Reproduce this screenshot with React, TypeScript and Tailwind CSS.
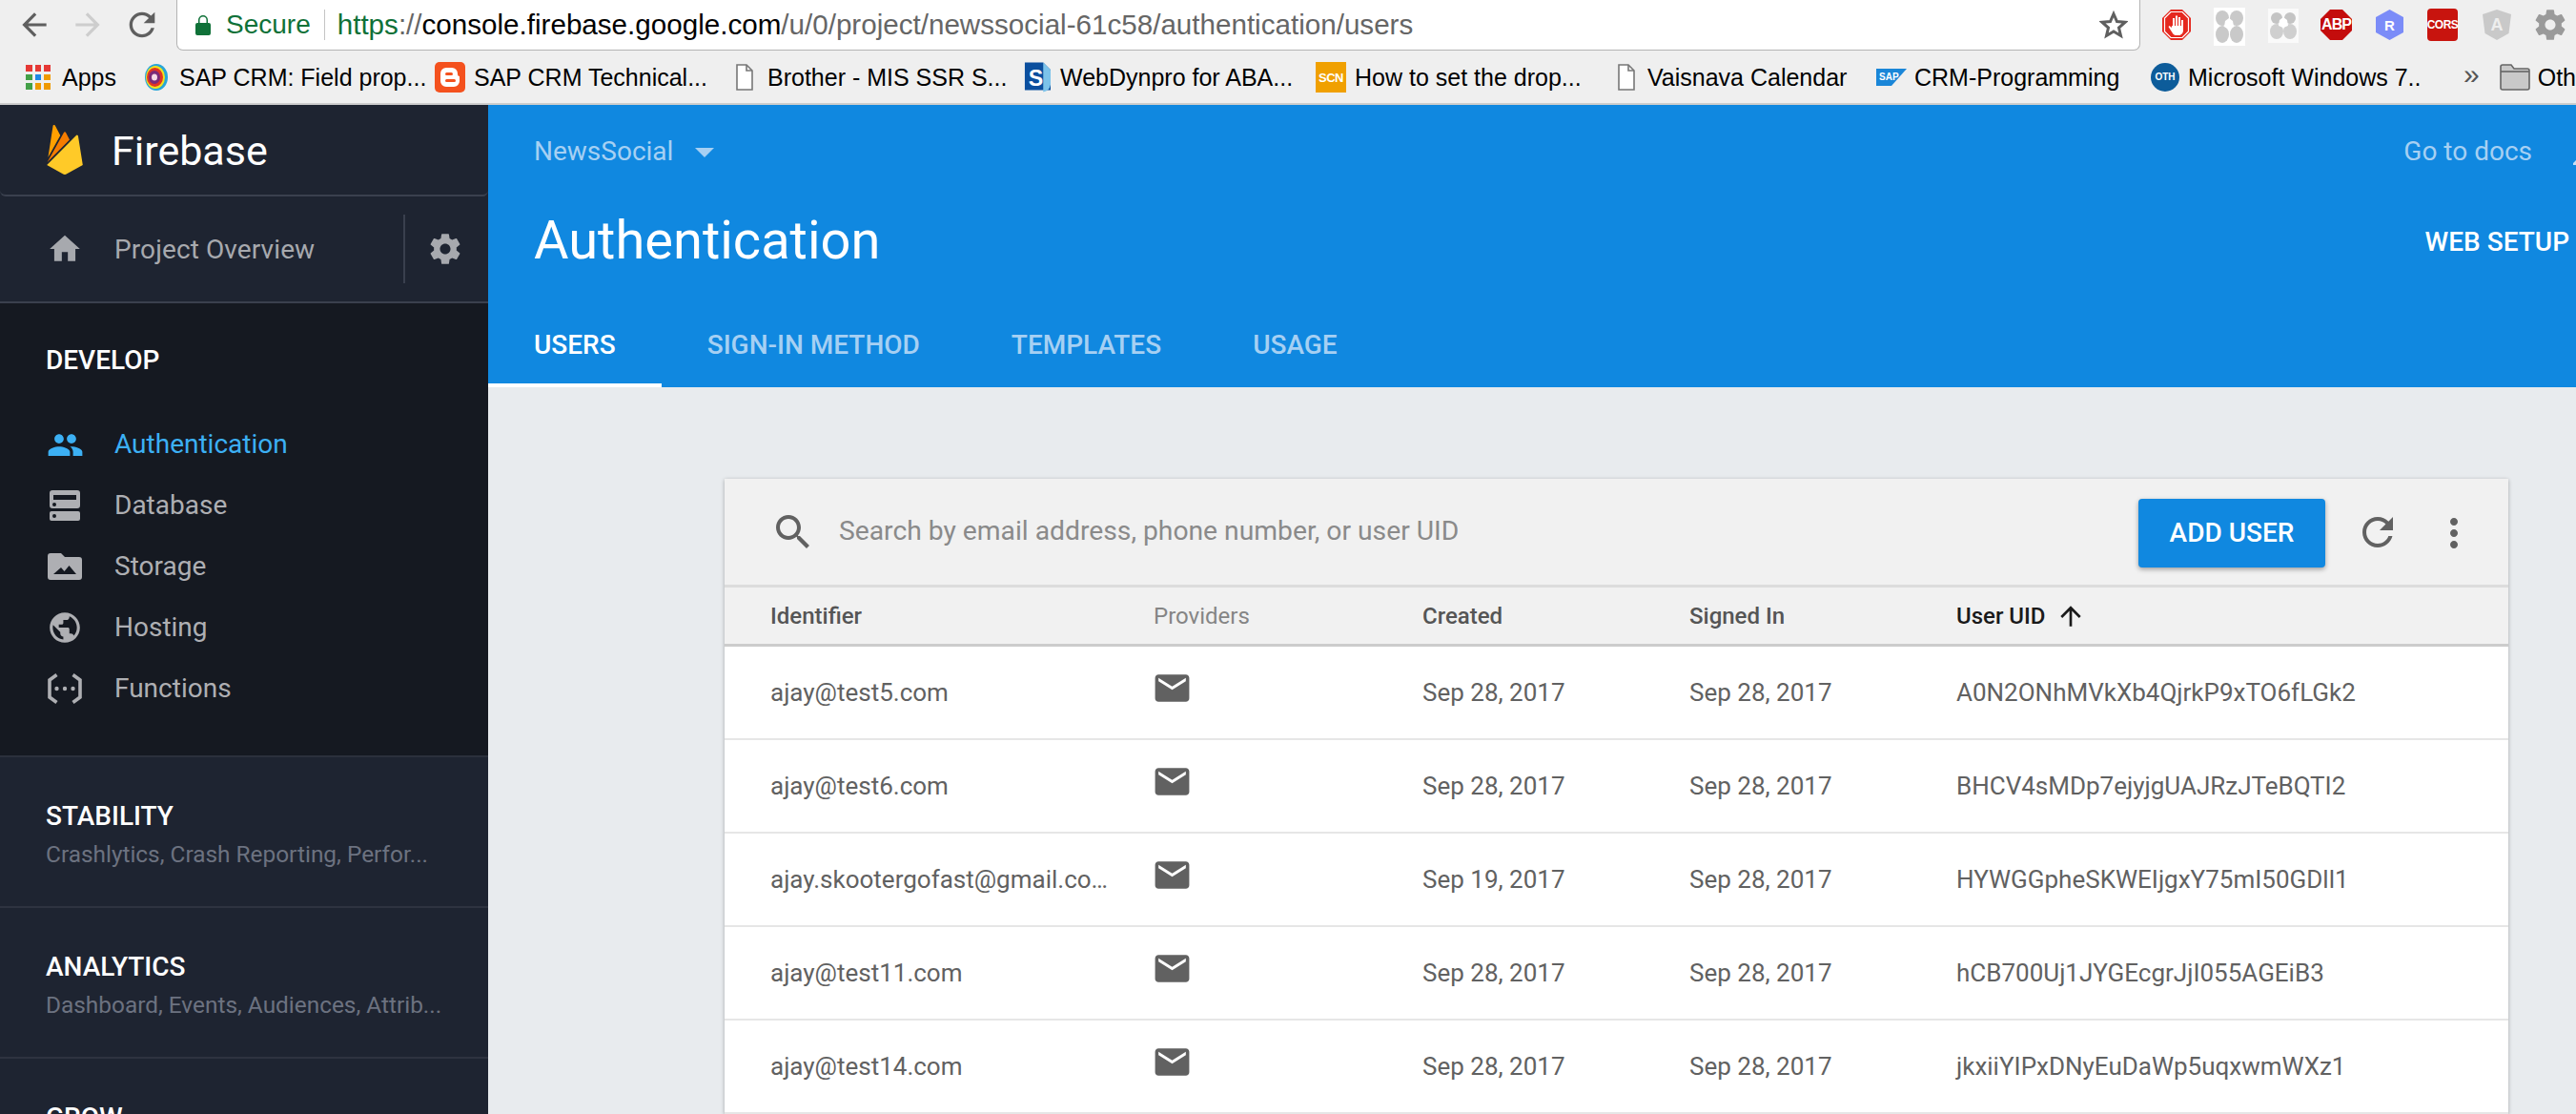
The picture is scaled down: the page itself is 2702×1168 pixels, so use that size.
import React from "react";

const P = {
  home: "M10 20v-6h4v6h5v-8h3L12 3 2 12h3v8z",
  settings:
    "M19.43 12.98c.04-.32.07-.64.07-.98s-.03-.66-.07-.98l2.11-1.65c.19-.15.24-.42.12-.64l-2-3.46c-.12-.22-.39-.3-.61-.22l-2.49 1c-.52-.4-1.08-.73-1.69-.98l-.38-2.65C14.46 2.18 14.25 2 14 2h-4c-.25 0-.46.18-.49.42l-.38 2.65c-.61.25-1.17.59-1.69.98l-2.49-1c-.23-.09-.49 0-.61.22l-2 3.46c-.13.22-.07.49.12.64l2.11 1.65c-.04.32-.07.65-.07.98s.03.66.07.98l-2.11 1.65c-.19.15-.24.42-.12.64l2 3.46c.12.22.39.3.61.22l2.49-1c.52.4 1.08.73 1.69.98l.38 2.65c.03.24.24.42.49.42h4c.25 0 .46-.18.49-.42l.38-2.65c.61-.25 1.17-.59 1.69-.98l2.49 1c.23.09.49 0 .61-.22l2-3.46c.12-.22.07-.49-.12-.64l-2.11-1.65zM12 15.5c-1.93 0-3.5-1.57-3.5-3.5s1.57-3.5 3.5-3.5 3.5 1.57 3.5 3.5-1.57 3.5-3.5 3.5z",
  people:
    "M16 11c1.66 0 2.99-1.34 2.99-3S17.66 5 16 5c-1.66 0-3 1.34-3 3s1.34 3 3 3zm-8 0c1.66 0 2.99-1.34 2.99-3S9.66 5 8 5C6.34 5 5 6.34 5 8s1.34 3 3 3zm0 2c-2.33 0-7 1.17-7 3.5V19h14v-2.5c0-2.33-4.67-3.5-7-3.5zm8 0c-.29 0-.62.02-.97.05 1.16.84 1.97 1.97 1.97 3.45V19h6v-2.5c0-2.33-4.67-3.5-7-3.5z",
  publicIcon:
    "M12 2C6.48 2 2 6.48 2 12s4.48 10 10 10 10-4.48 10-10S17.52 2 12 2zm-1 17.93c-3.95-.49-7-3.85-7-7.93 0-.62.08-1.21.21-1.79L9 15v1c0 1.1.9 2 2 2v1.93zm6.9-2.54c-.26-.81-1-1.39-1.9-1.39h-1v-3c0-.55-.45-1-1-1H8v-2h2c.55 0 1-.45 1-1V7h2c1.1 0 2-.9 2-2v-.41c2.93 1.19 5 4.06 5 7.41 0 2.08-.8 3.97-2.1 5.39z",
  search:
    "M15.5 14h-.79l-.28-.27C15.41 12.59 16 11.11 16 9.5 16 5.91 13.09 3 9.5 3S3 5.91 3 9.5 5.91 16 9.5 16c1.61 0 3.09-.59 4.23-1.57l.27.28v.79l5 4.99L20.49 19l-4.99-5zm-6 0C7.01 14 5 11.99 5 9.5S7.01 5 9.5 5 14 7.01 14 9.5 11.99 14 9.5 14z",
  refresh:
    "M17.65 6.35C16.2 4.9 14.21 4 12 4c-4.42 0-7.99 3.58-7.99 8s3.57 8 7.99 8c3.73 0 6.84-2.55 7.73-6h-2.08c-.82 2.33-3.04 4-5.65 4-3.31 0-6-2.69-6-6s2.69-6 6-6c1.66 0 3.14.69 4.22 1.78L13 11h7V4l-2.35 2.35z",
  more: "M12 8c1.1 0 2-.9 2-2s-.9-2-2-2-2 .9-2 2 .9 2 2 2zm0 2c-1.1 0-2 .9-2 2s.9 2 2 2 2-.9 2-2-.9-2-2-2zm0 6c-1.1 0-2 .9-2 2s.9 2 2 2 2-.9 2-2-.9-2-2-2z",
  mail: "M20 4H4c-1.1 0-1.99.9-1.99 2L2 18c0 1.1.9 2 2 2h16c1.1 0 2-.9 2-2V6c0-1.1-.9-2-2-2zm0 4l-8 5-8-5V6l8 5 8-5v2z",
  up: "M4 12l1.41 1.41L11 7.83V20h2V7.83l5.58 5.59L20 12l-8-8-8 8z",
  bell: "M12 22c1.1 0 2-.9 2-2h-4c0 1.1.9 2 2 2zm6-6v-5c0-3.07-1.63-5.64-4.5-6.32V4c0-.83-.67-1.5-1.5-1.5s-1.5.67-1.5 1.5v.68C7.64 5.36 6 7.92 6 11v5l-2 2v1h16v-1l-2-2z",
};

function Icon({ d, className }: { d: string; className: string }) {
  return (
    <svg viewBox="0 0 24 24" className={className} fill="currentColor">
      <path d={d} />
    </svg>
  );
}

function DocIcon() {
  return (
    <svg viewBox="0 0 18 28" className="w-[18px] h-[28px]" fill="#fff" stroke="#777" strokeWidth="1.6">
      <path d="M1 1h10l6 6v20H1z" />
      <path d="M11 1v6h6" fill="none" />
    </svg>
  );
}

function AppsIcon() {
  const c = ["#e53935", "#e53935", "#e53935", "#43a047", "#1e88e5", "#ef9a00", "#43a047", "#ef9a00", "#ef9a00"];
  return (
    <div className="grid grid-cols-3 gap-[3px] w-[26px] h-[26px]">
      {c.map((x, i) => (
        <div key={i} style={{ background: x }} />
      ))}
    </div>
  );
}

function TargetIcon() {
  return (
    <svg viewBox="0 0 24 28" className="w-[24px] h-[28px]">
      <ellipse cx="12" cy="14" rx="12" ry="14" fill="#27a6d8" />
      <ellipse cx="11" cy="14" rx="10" ry="12" fill="#f3e21c" />
      <ellipse cx="10.5" cy="14" rx="8.5" ry="10" fill="#e23424" />
      <ellipse cx="10" cy="14" rx="6" ry="7" fill="#7c2a78" />
      <ellipse cx="10" cy="14" rx="3" ry="3.5" fill="#f6dbe6" />
    </svg>
  );
}

function BloggerIcon() {
  return (
    <svg viewBox="0 0 32 32" className="w-[32px] h-[32px]">
      <rect width="32" height="32" rx="5" fill="#f4511e" />
      <path d="M12 6h6a6 6 0 016 6v1a2 2 0 002 2v5a6 6 0 01-6 6h-8a6 6 0 01-6-6v-8a6 6 0 016-6z" fill="#fff" />
      <rect x="11" y="11" width="8" height="3" rx="1.5" fill="#f4511e" />
      <rect x="11" y="18" width="11" height="3" rx="1.5" fill="#f4511e" />
    </svg>
  );
}

function SIcon() {
  return (
    <svg viewBox="0 0 30 32" className="w-[29px] h-[32px]">
      <path d="M2 0h20l8 8v22H2z" fill="#0b4f9e" />
      <path d="M22 0l8 8v16a10 10 0 01-8 8z" fill="#7cc3ea" />
      <text x="14" y="25" fontSize="24" fontWeight="700" fill="#fff" textAnchor="middle" fontFamily="Liberation Sans">S</text>
    </svg>
  );
}

function ScnIcon() {
  return (
    <div className="w-[32px] h-[32px] bg-[#f0a000] flex items-center justify-center text-white text-[13px] font-bold leading-none tracking-[-0.5px]">
      SCN
    </div>
  );
}

function SapIcon() {
  return (
    <svg viewBox="0 0 32 18" className="w-[32px] h-[18px]">
      <path d="M0 0h32L16 18H0z" fill="#1a86d8" />
      <text x="3" y="12" fontSize="10" fontWeight="700" fill="#fff" fontFamily="Liberation Sans">SAP</text>
    </svg>
  );
}

function OthIcon() {
  return (
    <div className="w-[30px] h-[30px] rounded-full bg-[#0d5c9a] flex items-center justify-center text-white text-[10px] font-bold leading-none">
      OTH
    </div>
  );
}

function FolderIcon() {
  return (
    <svg viewBox="0 0 32 28" className="w-[32px] h-[28px]" fill="#c9c9c9" stroke="#666" strokeWidth="1.6">
      <path d="M1 3a2 2 0 012-2h9l3 4h14a2 2 0 012 2v18a2 2 0 01-2 2H3a2 2 0 01-2-2z" />
      <path d="M1 8h30" fill="none" />
    </svg>
  );
}

const bookmarks = [
  { w: "w-[152px]", pl: "pl-[27px]", gap: "gap-[12px]", icon: <AppsIcon />, label: "Apps" },
  { w: "w-[304px]", pl: "", gap: "gap-[12px]", icon: <TargetIcon />, label: "SAP CRM: Field prop..." },
  { w: "w-[316px]", pl: "", gap: "gap-[9px]", icon: <BloggerIcon />, label: "SAP CRM Technical..." },
  { w: "w-[301px]", pl: "", gap: "gap-[15px]", icon: <DocIcon />, label: "Brother - MIS SSR S..." },
  { w: "w-[307px]", pl: "", gap: "gap-[10px]", icon: <SIcon />, label: "WebDynpro for ABA..." },
  { w: "w-[317px]", pl: "", gap: "gap-[9px]", icon: <ScnIcon />, label: "How to set the drop..." },
  { w: "w-[271px]", pl: "", gap: "gap-[13px]", icon: <DocIcon />, label: "Vaisnava Calendar" },
  { w: "w-[288px]", pl: "", gap: "gap-[8px]", icon: <SapIcon />, label: "CRM-Programming" },
  { w: "w-[328px]", pl: "", gap: "gap-[9px]", icon: <OthIcon />, label: "Microsoft Windows 7.." },
];

function Extensions() {
  return (
    <div className="flex items-center ml-[23px] h-[52px]">
      <svg viewBox="0 0 30 32" className="w-[30px] h-[32px]">
        <path d="M9 0h12l9 9v14l-9 9H9l-9-9V9z" fill="#e5281f" />
        <path d="M9 2.5h12L27.5 9v14L21 29.5H9L2.5 23V9z" fill="none" stroke="#fff" strokeWidth="1.2" />
        <path d="M10 10v9l-2.5-2-1 1 4.5 7c1 1.4 2 2 4 2h2c3 0 5-2 5-5V11h-2v6h-1V8h-2v9h-1V6.5h-2V17h-1V9h-2v8h-1v-7z" fill="#fff" />
      </svg>
      <svg viewBox="0 0 33 40" className="ml-[24px] w-[33px] h-[40px] mt-[4px]">
        <rect width="33" height="40" fill="#fff" />
        <ellipse cx="9" cy="11" rx="7" ry="8" fill="#c9c9c9" />
        <ellipse cx="24" cy="11" rx="7" ry="8" fill="#c9c9c9" />
        <ellipse cx="9" cy="28" rx="7" ry="9" fill="#c9c9c9" />
        <ellipse cx="24" cy="28" rx="7" ry="9" fill="#c9c9c9" />
        <path d="M12 14l4-3 4 3 1 6-5 3-5-3z" fill="#fff" />
      </svg>
      <svg viewBox="0 0 32 36" className="ml-[24px] w-[32px] h-[36px] mt-[2px]">
        <rect width="32" height="36" fill="#fafafa" />
        <ellipse cx="9" cy="10" rx="6" ry="6" fill="#c4c4c4" />
        <ellipse cx="23" cy="10" rx="6" ry="6" fill="#c4c4c4" />
        <ellipse cx="9" cy="24" rx="7" ry="8" fill="#cfcfcf" />
        <ellipse cx="23" cy="24" rx="7" ry="8" fill="#cfcfcf" />
        <path d="M12 12l4-3 4 3 1 6-5 2-5-2z" fill="#fff" />
      </svg>
      <div className="relative ml-[23px] w-[33px] h-[32px] flex items-center justify-center">
        <svg viewBox="0 0 33 32" className="absolute inset-0 w-[33px] h-[32px]">
          <path d="M10 0h13l10 10v12L23 32H10L0 22V10z" fill="#c40c0c" />
        </svg>
        <span className="relative text-white font-bold text-[16px] leading-none tracking-[-1px]">ABP</span>
      </div>
      <div className="relative ml-[25px] w-[29px] h-[32px] flex items-center justify-center">
        <svg viewBox="0 0 29 32" className="absolute inset-0 w-[29px] h-[32px]">
          <path d="M14.5 0L29 8v16l-14.5 8L0 24V8z" fill="#7b8cf8" />
        </svg>
        <span className="relative text-white font-bold text-[15px] leading-none">R</span>
      </div>
      <div className="ml-[25px] w-[32px] h-[34px] rounded-[4px] bg-[#c8140e] flex items-center justify-center text-white font-bold text-[12px] leading-none tracking-[-0.5px]">
        CORS
      </div>
      <div className="relative ml-[26px] w-[30px] h-[32px] flex items-center justify-center">
        <svg viewBox="0 0 30 32" className="absolute inset-0 w-[30px] h-[32px]">
          <path d="M15 0l15 5-2.500 20L15 32 2.500 25 0 5z" fill="#c9c9c9" />
        </svg>
        <span className="relative text-[#eeeeee] font-bold text-[18px] leading-none">A</span>
      </div>
      <Icon d={P.settings} className="ml-[22px] w-[38px] h-[38px] text-[#9a9a9a]" />
    </div>
  );
}

function ChromeBar() {
  return (
    <div className="font-['Liberation_Sans',sans-serif] bg-[#efefef] shrink-0">
      <div className="flex h-[52px]">
        <div className="flex items-center w-[185px] shrink-0">
          <Icon d="M20 11H7.830l5.590-5.590L12 4l-8 8 8 8 1.410-1.410L7.830 13H20z" className="ml-[17px] w-[38px] h-[38px] text-[#5f5f5f]" />
          <Icon d="M12 4l-1.410 1.410L16.170 11H4v2h12.170l-5.580 5.590L12 20l8-8z" className="ml-[18px] w-[38px] h-[38px] text-[#cdcdcd]" />
          <Icon d={P.refresh} className="ml-[18px] w-[40px] h-[40px] text-[#5f5f5f]" />
        </div>
        <div className="flex items-center w-[2060px] shrink-0 h-[53px] bg-white border-b border-x border-[#b4b4b4] rounded-b-[7px]">
          <svg viewBox="0 0 18 22" className="ml-[18px] w-[18px] h-[22px]">
            <path d="M4 9V6a5 5 0 0110 0v3M3 9h12a2 2 0 012 2v9a2 2 0 01-2 2H3a2 2 0 01-2-2v-9a2 2 0 012-2z" fill="#0f7138" stroke="#0f7138" strokeWidth="0" />
            <path d="M5.500 9V6a3.500 3.500 0 017 0v3z" fill="#fff" />
          </svg>
          <span className="ml-[15px] text-[28px] leading-none text-[#0f7138]">Secure</span>
          <div className="ml-[14px] w-px h-[32px] bg-[#c4c4c4]" />
          <div className="ml-[13px] text-[29.6px] leading-none whitespace-nowrap flex-1 text-[#666666]">
            <span className="text-[#0f7138]">https</span>
            <span>://</span>
            <span className="text-black">console.firebase.google.com</span>
            <span>/u/0/project/newssocial-61c58/authentication/users</span>
          </div>
          <svg viewBox="0 0 30 30" className="w-[30px] h-[30px] mr-[12px]" fill="none" stroke="#5f5f5f" strokeWidth="3">
            <path d="M15 3.500l3.500 8 8.500.8-6.500 5.700 2 8.500-7.500-4.500-7.500 4.500 2-8.500L3 12.300l8.500-.8z" />
          </svg>
        </div>
        <Extensions />
      </div>
      <div className="flex items-center h-[58px] pt-[2px] border-b-2 border-[#cdcdcd] text-[25px] leading-none text-black whitespace-nowrap overflow-hidden">
        {bookmarks.map((b) => (
          <div key={b.label} className={`flex items-center shrink-0 ${b.w} ${b.pl} ${b.gap}`}>
            {b.icon}
            <span>{b.label}</span>
          </div>
        ))}
        <span className="shrink-0 text-[#555] text-[30px] mb-[6px]">»</span>
        <div className="flex items-center gap-[8px] ml-[21px] shrink-0">
          <FolderIcon />
          <span>Other Bookmarks</span>
        </div>
      </div>
    </div>
  );
}

function StorageIcon() {
  return (
    <svg viewBox="0 0 36 28" className="w-[36px] h-[28px]" fill="currentColor">
      <path
        fillRule="evenodd"
        d="M3 0h11l4 4h15a3 3 0 013 3v18a3 3 0 01-3 3H3a3 3 0 01-3-3V3a3 3 0 013-3zM6 22h24l-7.500-9-5 6-3.500-4z"
      />
    </svg>
  );
}

function DatabaseIcon() {
  return (
    <svg viewBox="0 0 32 32" className="w-[32px] h-[32px]" fill="currentColor">
      <path
        fillRule="evenodd"
        d="M3 0h26a3 3 0 013 3v13a3 3 0 01-3 3H3a3 3 0 01-3-3V3a3 3 0 013-3zM4 5v5h24V5zM5 13a2 2 0 100 4 2 2 0 000-4z"
      />
      <path fillRule="evenodd" d="M2 22h28a2 2 0 012 2v6a2 2 0 01-2 2H2a2 2 0 01-2-2v-6a2 2 0 012-2zM5 25a2 2 0 100 4 2 2 0 000-4z" />
    </svg>
  );
}

function FunctionsIcon() {
  return (
    <svg viewBox="0 0 36 32" className="w-[36px] h-[32px]" fill="none" stroke="currentColor" strokeWidth="3.600">
      <path d="M9.500 1.500L2 7v18l7.500 5.500" />
      <path d="M26.500 1.500L34 7v18l-7.500 5.500" />
      <circle cx="9.500" cy="16" r="2.200" fill="currentColor" stroke="none" />
      <circle cx="18" cy="16" r="2.200" fill="currentColor" stroke="none" />
      <circle cx="26.500" cy="16" r="2.200" fill="currentColor" stroke="none" />
    </svg>
  );
}

const nav = [
  { label: "Authentication", icon: <Icon d={P.people} className="w-[39px] h-[39px]" />, active: true },
  { label: "Database", icon: <DatabaseIcon /> },
  { label: "Storage", icon: <StorageIcon /> },
  { label: "Hosting", icon: <Icon d={P.publicIcon} className="w-[38px] h-[38px]" /> },
  { label: "Functions", icon: <FunctionsIcon /> },
];

function Sidebar() {
  return (
    <aside className="w-[512px] shrink-0 flex flex-col bg-[#1e2431] overflow-hidden">
      <div className="h-[96px] shrink-0 flex items-center pl-[42px] border-b-2 border-[#3a404e] rounded-b-[6px]">
        <svg viewBox="0 0 24 24" className="w-[52px] h-[52px] -mt-[1px]">
          <path d="M3.890 15.672L6.255.461A.542.542 0 017.270.288l2.543 4.771z" fill="#ffa000" />
          <path d="M14.300 7.147l-1.820-3.482a.542.542 0 00-.960 0L3.530 17.984z" fill="#f57c00" />
          <path d="M20.684 19.364l-2.250-14a.54.54 0 00-.919-.295L3.316 19.365l7.856 4.427a1.621 1.621 0 001.588 0z" fill="#ffca28" />
        </svg>
        <span className="ml-[23px] mt-[3px] text-[43px] leading-none text-white">Firebase</span>
      </div>
      <div className="h-[112px] shrink-0 flex items-center pl-[49px] border-b-2 border-[#3a404e] text-[#a7a9ae]">
        <Icon d={P.home} className="w-[38px] h-[38px]" />
        <span className="ml-[33px] mt-[2px] text-[28px] leading-none w-[303px] tracking-[0.1px]">Project Overview</span>
        <div className="w-[2px] h-[72px] bg-[#3a404e]" />
        <Icon d={P.settings} className="ml-[23px] w-[38px] h-[38px] text-[#a7a9ae]" />
      </div>
      <div className="h-[476px] shrink-0 bg-[#151921] pl-[48px] pt-[48px] border-b-2 border-[#2b303c]">
        <div className="text-[28px] leading-[24px] text-white font-medium">DEVELOP</div>
        <div className="mt-[56px] flex flex-col gap-[24px] -ml-[4px]">
          {nav.map((n) => (
            <div key={n.label} className={`flex items-center h-[40px] ${n.active ? "text-[#3cb0f4]" : "text-[#aeafb3]"}`}>
              <div className="w-[48px] flex items-center justify-center">{n.icon}</div>
              <span className="ml-[28px] text-[28px] leading-none">{n.label}</span>
            </div>
          ))}
        </div>
      </div>
      {[
        { t: "STABILITY", s: "Crashlytics, Crash Reporting, Perfor..." },
        { t: "ANALYTICS", s: "Dashboard, Events, Audiences, Attrib..." },
      ].map((g) => (
        <div key={g.t} className="h-[158px] shrink-0 pl-[48px] pt-[48px] border-b-2 border-[#2e3340]">
          <div className="text-[28px] leading-[28px] text-white font-medium">{g.t}</div>
          <div className="mt-[12px] text-[24.4px] leading-[28px] text-[#6c7280] whitespace-nowrap">{g.s}</div>
        </div>
      ))}
      <div className="pl-[48px] pt-[48px] text-[28px] leading-[28px] text-white font-medium">GROW</div>
    </aside>
  );
}

function Header() {
  return (
    <header className="h-[296px] shrink-0 bg-[#1088e0] flex flex-col">
      <div className="flex items-start justify-between pl-[48px] flex-1">
        <div>
          <div className="flex items-center h-[98px] text-[28px] leading-none text-[#a6d0f3]">
            <span>NewsSocial</span>
            <div className="ml-[23px] mt-[1px] w-0 h-0 border-x-[10px] border-x-transparent border-t-[10px] border-t-[#a6d0f3]" />
          </div>
          <h1 className="mt-[12px] text-[56px] leading-[64px] text-white">Authentication</h1>
        </div>
        <div className="flex flex-col items-end">
          <div className="flex items-center h-[98px] text-[28px] leading-none text-[#a6d0f3]">
            <span>Go to docs</span>
            <Icon d={P.bell} className="ml-[35px] -mr-[37px] w-[48px] h-[48px] text-[#c5dff5]" />
          </div>
          <div className="mt-[32px] mr-[7px] text-[28px] leading-none font-medium text-white">WEB SETUP</div>
        </div>
      </div>
      <nav className="flex h-[88px] text-[28px] leading-none font-medium">
        {["USERS", "SIGN-IN METHOD", "TEMPLATES", "USAGE"].map((t, i) => (
          <div
            key={t}
            className={`flex items-center px-[48px] pt-[4px] border-b-4 ${i === 0 ? "text-white border-white" : "text-[#a6d0f3] border-transparent"}`}
          >
            {t}
          </div>
        ))}
      </nav>
    </header>
  );
}

const rows = [
  ["ajay@test5.com", "Sep 28, 2017", "Sep 28, 2017", "A0N2ONhMVkXb4QjrkP9xTO6fLGk2"],
  ["ajay@test6.com", "Sep 28, 2017", "Sep 28, 2017", "BHCV4sMDp7ejyjgUAJRzJTeBQTI2"],
  ["ajay.skootergofast@gmail.com", "Sep 19, 2017", "Sep 28, 2017", "HYWGGpheSKWEIjgxY75mI50GDll1"],
  ["ajay@test11.com", "Sep 28, 2017", "Sep 28, 2017", "hCB700Uj1JYGEcgrJjI055AGEiB3"],
  ["ajay@test14.com", "Sep 28, 2017", "Sep 28, 2017", "jkxiiYIPxDNyEuDaWp5uqxwmWXz1"],
];

function Card() {
  return (
    <div className="w-[1871px] bg-white shadow-[0_1px_4px_rgba(0,0,0,0.3)]">
      <div className="h-[114px] bg-[#f1f1f1] flex items-center pl-[48px] pr-[33px] border-b-[3px] border-[#dcdcdc]">
        <Icon d={P.search} className="w-[48px] h-[48px] text-[#616161]" />
        <div className="ml-[24px] flex-1 text-[28.25px] leading-none text-[#8a8a8a]">Search by email address, phone number, or user UID</div>
        <button className="w-[196px] h-[72px] mt-[3px] rounded-[4px] bg-[#1088e0] text-white text-[28px] font-medium leading-none shadow-[0_2px_5px_rgba(0,0,0,0.35)]">ADD USER</button>
        <Icon d={P.refresh} className="ml-[31px] w-[48px] h-[48px] text-[#616161]" />
        <Icon d={P.more} className="ml-[32px] w-[48px] h-[48px] mt-[3px] text-[#616161]" />
      </div>
      <div className="h-[62px] bg-[#f1f1f1] grid grid-cols-[402px_282px_280px_280px_1fr] items-center pl-[48px] border-b-[3px] border-[#cccccc] text-[24px] leading-none font-medium text-[#555555]">
        <div>Identifier</div>
        <div className="font-normal text-[#858585]">Providers</div>
        <div>Created</div>
        <div>Signed In</div>
        <div className="flex items-center text-[#1a1a1a]">
          User UID
          <Icon d={P.up} className="ml-[10px] w-[32px] h-[32px]" />
        </div>
      </div>
      {rows.map((r) => (
        <div key={r[3]} className="h-[98px] grid grid-cols-[402px_282px_280px_280px_1fr] items-center pl-[48px] pb-[1px] border-b-2 border-[#e6e6e6] text-[26px] leading-none text-[#616161]">
          <div className="w-[356px] truncate leading-[32px]">{r[0]}</div>
          <Icon d={P.mail} className="w-[43px] h-[43px] -ml-[2px] -mt-[8px]" />
          <div>{r[1]}</div>
          <div>{r[2]}</div>
          <div>{r[3]}</div>
        </div>
      ))}
    </div>
  );
}

export default function App() {
  return (
    <div className="w-[2702px] h-[1168px] overflow-hidden flex flex-col font-['Roboto',sans-serif] bg-[#e8ebee]">
      <ChromeBar />
      <div className="flex flex-1 min-h-0">
        <Sidebar />
        <main className="flex-1 min-w-0 flex flex-col overflow-hidden">
          <Header />
          <div className="pt-[96px] pl-[248px]">
            <Card />
          </div>
        </main>
      </div>
    </div>
  );
}
